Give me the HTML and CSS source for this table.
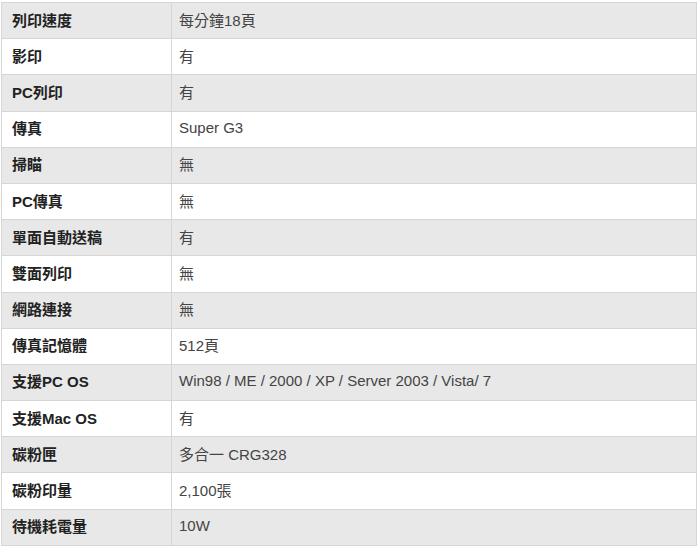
FILE: index.html
```html
<!DOCTYPE html>
<html lang="zh-Hant">
<head>
<meta charset="utf-8">
<link rel="stylesheet" href="styles.css">
</head>
<body>
<table class="spec">
<tbody>
<tr class="alt"><th>列印速度</th><td>每分鐘18頁</td></tr>
<tr><th>影印</th><td>有</td></tr>
<tr class="alt"><th>PC列印</th><td>有</td></tr>
<tr><th>傳真</th><td>Super G3</td></tr>
<tr class="alt"><th>掃瞄</th><td>無</td></tr>
<tr><th>PC傳真</th><td>無</td></tr>
<tr class="alt"><th>單面自動送稿</th><td>有</td></tr>
<tr><th>雙面列印</th><td>無</td></tr>
<tr class="alt"><th>網路連接</th><td>無</td></tr>
<tr><th>傳真記憶體</th><td>512頁</td></tr>
<tr class="alt"><th>支援PC OS</th><td>Win98 / ME / 2000 / XP / Server 2003 / Vista/ 7</td></tr>
<tr><th>支援Mac OS</th><td>有</td></tr>
<tr class="alt"><th>碳粉匣</th><td>多合一 CRG328</td></tr>
<tr><th>碳粉印量</th><td>2,100張</td></tr>
<tr class="alt"><th>待機耗電量</th><td>10W</td></tr>
</tbody>
</table>
</body>
</html>
```

FILE: styles.css
```css
html, body {
  margin: 0;
  padding: 0;
  background: #ffffff;
}

body {
  padding: 2px 2px 0 1px;
  font-family: "Liberation Sans", Arial, "Noto Sans CJK TC", sans-serif;
  font-size: 15px;
  color: #333333;
}

.spec {
  width: 696px;
  border-collapse: collapse;
  table-layout: fixed;
}

.spec th,
.spec td {
  height: 32.2px;
  padding: 0 7px 3px;
  border: 1px solid #d6d6d6;
  text-align: left;
  vertical-align: middle;
  white-space: nowrap;
}

.spec th {
  width: 152px;
  padding-left: 10px;
  font-weight: bold;
  color: #222222;
}

.spec td {
  font-weight: normal;
  color: #444444;
}

.spec tr.alt th,
.spec tr.alt td {
  background: #e8e8e8;
}
```
